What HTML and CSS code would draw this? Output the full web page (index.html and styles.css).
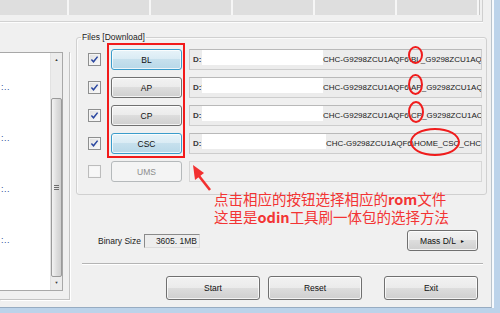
FILE: index.html
```html
<!DOCTYPE html>
<html lang="zh-CN">
<head>
    <meta charset="UTF-8">
    <meta name="viewport" content="width=device-width, initial-scale=1.0">
    <title>Odin3 - Files [Download]</title>
    <link rel="stylesheet" href="styles.css">
</head>
<body>
    <div class="screen">
        <div class="client">
            <div class="tabs">
                <div class="tab first"></div>
                <div class="tab"></div>
                <div class="tab"></div>
                <div class="tab"></div>
                <div class="tab"></div>
                <div class="tab"></div>
            </div>

            <div class="main">
                <!-- 左侧日志列表 -->
                <div class="left">
                    <div class="list">
                        <div class="items">
                            <div class="item">:..</div>
                            <div class="item">:..</div>
                            <div class="item">:..</div>
                            <div class="item">:..</div>
                        </div>
                        <div class="scroll">
                            <div class="sc-btn up">&#9650;</div>
                            <div class="track">
                                <div class="thumb"><span class="grip"></span></div>
                            </div>
                            <div class="sc-btn down">&#9660;</div>
                        </div>
                    </div>
                </div>

                <div class="right">
                    <fieldset class="files">
                        <legend>Files [Download]</legend>

                        <div class="row">
                            <span class="check"><svg viewBox="0 0 11 11" width="11" height="11"><path d="M2.4 5.6 L4.5 7.8 L8.6 2.6" /></svg></span>
                            <button class="btn blue">BL</button>
                            <div class="field">
                                <div class="field-text"><span class="drive">D:</span><span class="mask"></span><span class="path">CHC-G9298ZCU1AQF6\BL_G9298ZCU1AQ</span></div>
                                <span class="ring ring-bl"></span>
                            </div>
                        </div>

                        <div class="row">
                            <span class="check"><svg viewBox="0 0 11 11" width="11" height="11"><path d="M2.4 5.6 L4.5 7.8 L8.6 2.6" /></svg></span>
                            <button class="btn">AP</button>
                            <div class="field">
                                <div class="field-text"><span class="drive">D:'</span><span class="mask"></span><span class="path">CHC-G9298ZCU1AQF6\AP_G9298ZCU1AQ</span></div>
                                <span class="ring ring-ap"></span>
                            </div>
                        </div>

                        <div class="row">
                            <span class="check"><svg viewBox="0 0 11 11" width="11" height="11"><path d="M2.4 5.6 L4.5 7.8 L8.6 2.6" /></svg></span>
                            <button class="btn">CP</button>
                            <div class="field">
                                <div class="field-text"><span class="drive">D:</span><span class="mask"></span><span class="path">CHC-G9298ZCU1AQF6\CP_G9298ZCU1AC</span></div>
                                <span class="ring ring-cp"></span>
                            </div>
                        </div>

                        <div class="row">
                            <span class="check"><svg viewBox="0 0 11 11" width="11" height="11"><path d="M2.4 5.6 L4.5 7.8 L8.6 2.6" /></svg></span>
                            <button class="btn blue">CSC</button>
                            <div class="field">
                                <div class="field-text"><span class="drive">D:</span><span class="mask wide"></span><span class="path">CHC-G9298ZCU1AQF6\HOME_CSC_CHC_</span></div>
                                <span class="ring ring-csc"></span>
                            </div>
                        </div>

                        <div class="row">
                            <span class="check off"></span>
                            <button class="btn off">UMS</button>
                            <div class="field empty"></div>
                        </div>
                    </fieldset>

                    <div class="size-row">
                        <span class="size-label">Binary Size</span>
                        <span class="size-box">3605. 1MB</span>
                        <span class="spacer"></span>
                        <button class="btn mass">Mass D/L <span class="tri">&#9658;</span></button>
                    </div>

                    <div class="sep"></div>

                    <div class="actions">
                        <button class="btn big">Start</button>
                        <button class="btn big">Reset</button>
                        <button class="btn big exit">Exit</button>
                    </div>

                    <!-- 标注 -->
                    <div class="mark-box"></div>
                    <svg class="mark-arrow" viewBox="0 0 22 30" width="22" height="30">
                        <line x1="9" y1="14" x2="20" y2="28" />
                        <polygon points="3,3 5,18 14,11" />
                    </svg>
                    <div class="note">
                        <div>点击相应的按钮选择相应的<b>rom</b>文件</div>
                        <div>这里是<b>odin</b>工具刷一体包的选择方法</div>
                    </div>
                </div>
            </div>
        </div>
    </div>
</body>
</html>
```

FILE: styles.css
```css
body {
    margin: 0;
    font-family: "Liberation Sans", Arial, sans-serif;
    font-size: 8.5px;
    color: #1b1b1b;
}
.screen {
    width: 500px;
    height: 313px;
    overflow: hidden;
    background: #bcd3ea;
}
.client {
    width: 491px;
    height: 307px;
    background: #f0f0f0;
    border-right: 1px solid #b9c3cc;
    border-bottom: 1px solid #97acc2;
    box-shadow: 2px 0 0 #f7fafd;
}

/* 顶部格子 */
.tabs {
    display: flex;
    width: 483px;
    height: 22px;
    box-sizing: border-box;
    border-bottom: 1px solid #d2d2d2;
    border-right: 1px solid #cfcfcf;
    box-shadow: 0 1px 0 #fdfdfd;
}
.tab {
    width: 80px;
    height: 15px;
    background: #dedede;
    border-right: 2px solid #f6f6f6;
    box-shadow: 1px 0 0 #c9c9c9;
}
.tab.first { width: 67px; }

.main {
    display: flex;
    gap: 6px;
}

/* 左侧列表 */
.left {
    width: 69px;
    height: 247px;
    margin-top: 30px;
    border-right: 1px solid #c3c3c3;
    border-bottom: 1px solid #c3c3c3;
    box-shadow: 1px 1px 0 #fff;
}
.list {
    display: flex;
    width: 63px;
    height: 239px;
    box-sizing: border-box;
    background: #fff;
    border-top: 1px solid #a8a8a8;
    border-right: 1px solid #a8a8a8;
    border-bottom: 1px solid #a8a8a8;
}
.items {
    flex: 1;
    padding-top: 29px;
    overflow: hidden;
}
.item {
    height: 51px;
    padding-left: 1px;
    color: #2b4796;
    font-size: 9px;
    letter-spacing: 0.5px;
}
.scroll {
    width: 11px;
    display: flex;
    flex-direction: column;
    background: #ececec;
    border-left: 1px solid #e2e2e2;
}
.sc-btn {
    font-size: 4px;
    color: #3a3a3a;
    text-align: center;
}
.sc-btn.up { height: 17px; line-height: 14px; }
.sc-btn.down { height: 13px; line-height: 12px; }
.track {
    flex: 1;
    display: flex;
    flex-direction: column;
}
.thumb {
    margin-top: auto;
    height: 179px;
    box-sizing: border-box;
    border: 1px solid #9a9a9a;
    border-radius: 2px;
    background: linear-gradient(90deg, #f3f3f3, #dcdcdc 55%, #cfcfcf);
    display: flex;
    align-items: center;
    justify-content: center;
}
.grip {
    width: 5px;
    height: 5px;
    border-top: 1px solid #6d6d6d;
    border-bottom: 1px solid #6d6d6d;
    background: linear-gradient(#6d6d6d, #6d6d6d) center / 5px 1px no-repeat;
    box-sizing: border-box;
}

/* 右侧 */
.right {
    position: relative;
    width: 414px;
    display: flex;
    flex-direction: column;
}
.files {
    margin: 10px 3px 0 0;
    padding: 7px 4px 12px 0;
    border: 1px solid #d0d0d0;
    border-radius: 3px;
    box-shadow: inset 1px 1px 0 #fafafa;
    min-inline-size: 0;
    display: flex;
    flex-direction: column;
    gap: 7px;
}
.files legend {
    margin-left: 4px;
    padding: 0 1px;
    line-height: 10px;
    color: #222;
}
.row {
    display: flex;
    align-items: center;
    height: 21px;
    margin-left: 11px;
}
.check {
    width: 13px;
    height: 13px;
    box-sizing: border-box;
    border: 1px solid #8e8f8f;
    background: linear-gradient(135deg, #dedede, #fbfbfb);
    box-shadow: inset 0 0 0 1px #f4f4f4;
    display: flex;
    align-items: center;
    justify-content: center;
}
.check path {
    fill: none;
    stroke: #2a47a0;
    stroke-width: 1.5;
}
.check.off {
    border-color: #bcbcbc;
    background: #f7f7f7;
}
.btn {
    height: 21px;
    box-sizing: border-box;
    padding: 0;
    border: 1px solid #707070;
    border-radius: 3px;
    background: linear-gradient(#f2f2f2 0%, #ebebeb 49%, #dddddd 50%, #cfcfcf 100%);
    box-shadow: inset 0 0 0 1px rgba(255, 255, 255, 0.75);
    font: inherit;
    color: #111;
}
.row .btn {
    width: 71px;
    margin-left: 10px;
    margin-right: 7px;
}
.btn.blue {
    border-color: #3a9ccb;
    background: linear-gradient(#e7f3f9 0%, #d9ebf4 49%, #c6e0ed 50%, #b8d8e8 100%);
}
.btn.off {
    border-color: #b5b9bb;
    background: #f4f4f4;
    box-shadow: none;
    color: #8c8c8c;
}
.field {
    position: relative;
    width: 293px;
    height: 21px;
    box-sizing: border-box;
    border: 1px solid #cdcdcd;
    border-top-color: #b9b9b9;
    background: #ececec;
}
.field.empty { background: #f0f0f0; border-color: #d6d6d6; }
.field-text {
    display: flex;
    align-items: center;
    height: 100%;
    padding-left: 3px;
    overflow: hidden;
    white-space: nowrap;
    font-size: 8px;
}
.drive {
    flex: none;
    width: 9px;
    font-weight: bold;
    color: #3a3a3a;
}
.mask {
    flex: none;
    align-self: flex-start;
    width: 121px;
    height: 15px;
    background: #fff;
}
.mask.wide { width: 124px; }
.path {
    flex: none;
    color: #202020;
}
.ring {
    position: absolute;
    box-sizing: border-box;
    border: 2px solid #f01c1c;
    border-radius: 50%;
}
.ring-bl { left: 218px; top: -4px; width: 15px; height: 18px; }
.ring-ap { left: 218px; top: -4px; width: 15px; height: 21px; }
.ring-cp { left: 218px; top: -5px; width: 16px; height: 22px; }
.ring-csc { left: 220px; top: -6px; width: 50px; height: 28px; }

.size-row {
    display: flex;
    align-items: center;
    height: 21px;
    margin-top: 35px;
    padding: 0 12px 0 22px;
}
.size-label { color: #222; }
.size-box {
    width: 56px;
    height: 14px;
    margin-left: 3px;
    box-sizing: border-box;
    border: 1px solid #dcdcdc;
    border-top-color: #8a8a8a;
    border-left-color: #8a8a8a;
    background: #ededed;
    text-align: right;
    padding-right: 2px;
    line-height: 12px;
}
.spacer { flex: 1; }
.btn.mass { width: 71px; }
.tri {
    font-size: 5px;
    margin-left: 2px;
    vertical-align: 1px;
}
.sep {
    height: 0;
    margin: 12px 7px 0 6px;
    border-top: 1px solid #b4b4b4;
    border-bottom: 1px solid #fff;
}
.actions {
    display: flex;
    justify-content: flex-end;
    gap: 8px;
    margin-top: 11px;
    padding-right: 12px;
}
.btn.big {
    width: 94px;
    height: 24px;
}
.btn.exit { margin-left: 14px; }

/* 红色标注 */
.mark-box {
    position: absolute;
    left: 31px;
    top: 21px;
    width: 78px;
    height: 115px;
    box-sizing: border-box;
    border: 2px solid #f21a1a;
}
.mark-arrow {
    position: absolute;
    left: 114px;
    top: 140px;
}
.mark-arrow line {
    stroke: #f23030;
    stroke-width: 2.6;
}
.mark-arrow polygon { fill: #f23030; }
.note {
    position: absolute;
    left: 138px;
    top: 168px;
    font-family: "Noto Sans CJK SC", sans-serif;
    font-size: 14.5px;
    color: #f33434;
    white-space: nowrap;
}
.note div {
    height: 18px;
    line-height: 18px;
}
.note b { font-weight: 600; }
```
